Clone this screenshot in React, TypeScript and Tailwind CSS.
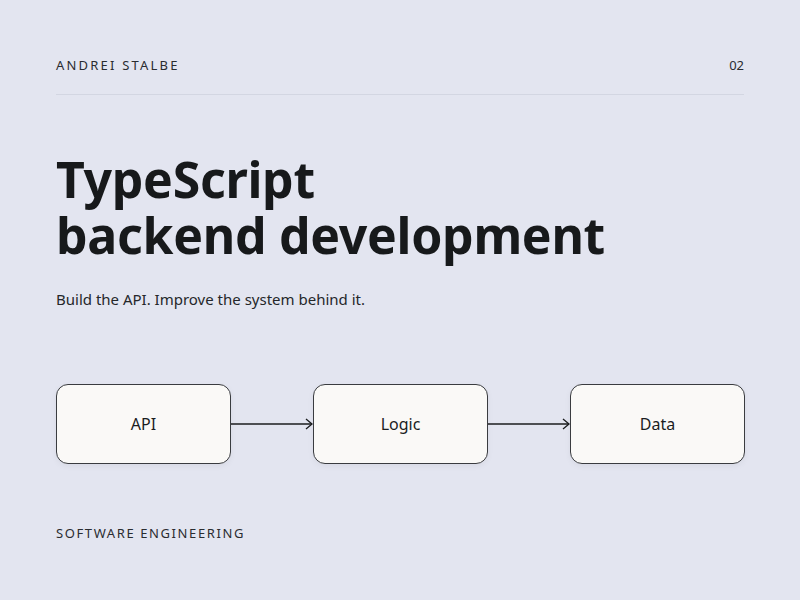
export default function App() {
  const nodes = ["API", "Logic", "Data"];
  return (
    <div className="w-[800px] h-[600px] bg-[#e3e5f0] px-14 pt-[57px] text-[#1b1d1f] font-['Liberation_Sans']">
      <div className="flex justify-between items-center h-[18px]">
        <span className="text-[13px] tracking-[2.2px] text-[#2a2c30]">ANDREI STALBE</span>
        <span className="text-[13px] text-[#2a2c30]">02</span>
      </div>
      <div className="border-t border-[#d3d6e2] mt-[19px]" />
      <h1 className="mt-[56px] text-[50px] font-bold leading-[56px] tracking-[-0.3px] text-[#17191b]">
        TypeScript
        <br />
        backend development
      </h1>
      <p className="mt-[25px] text-[15px] text-[#25272a]">Build the API. Improve the system behind it.</p>
      <div className="mt-[73px] flex items-center">
        {nodes.map((n, i) => (
          <div key={n} className="flex items-center">
            {i > 0 && (
              <svg width="82" height="12" viewBox="0 0 82 12" className="block">
                <line x1="0" y1="6" x2="81" y2="6" stroke="#1b1d1f" strokeWidth="1.3" />
                <polyline points="75,1 81,6 75,11" fill="none" stroke="#1b1d1f" strokeWidth="1.3" />
              </svg>
            )}
            <div className="w-[175px] h-[80px] rounded-[12px] border border-[#3a3c40] bg-[#faf9f7] flex items-center justify-center text-[16px] text-[#1b1d1f] shadow-[0_2px_6px_rgba(0,0,0,0.05)]">
              {n}
            </div>
          </div>
        ))}
      </div>
      <div className="mt-[60px] text-[13px] tracking-[1.6px] text-[#2a2c30]">SOFTWARE ENGINEERING</div>
    </div>
  );
}
